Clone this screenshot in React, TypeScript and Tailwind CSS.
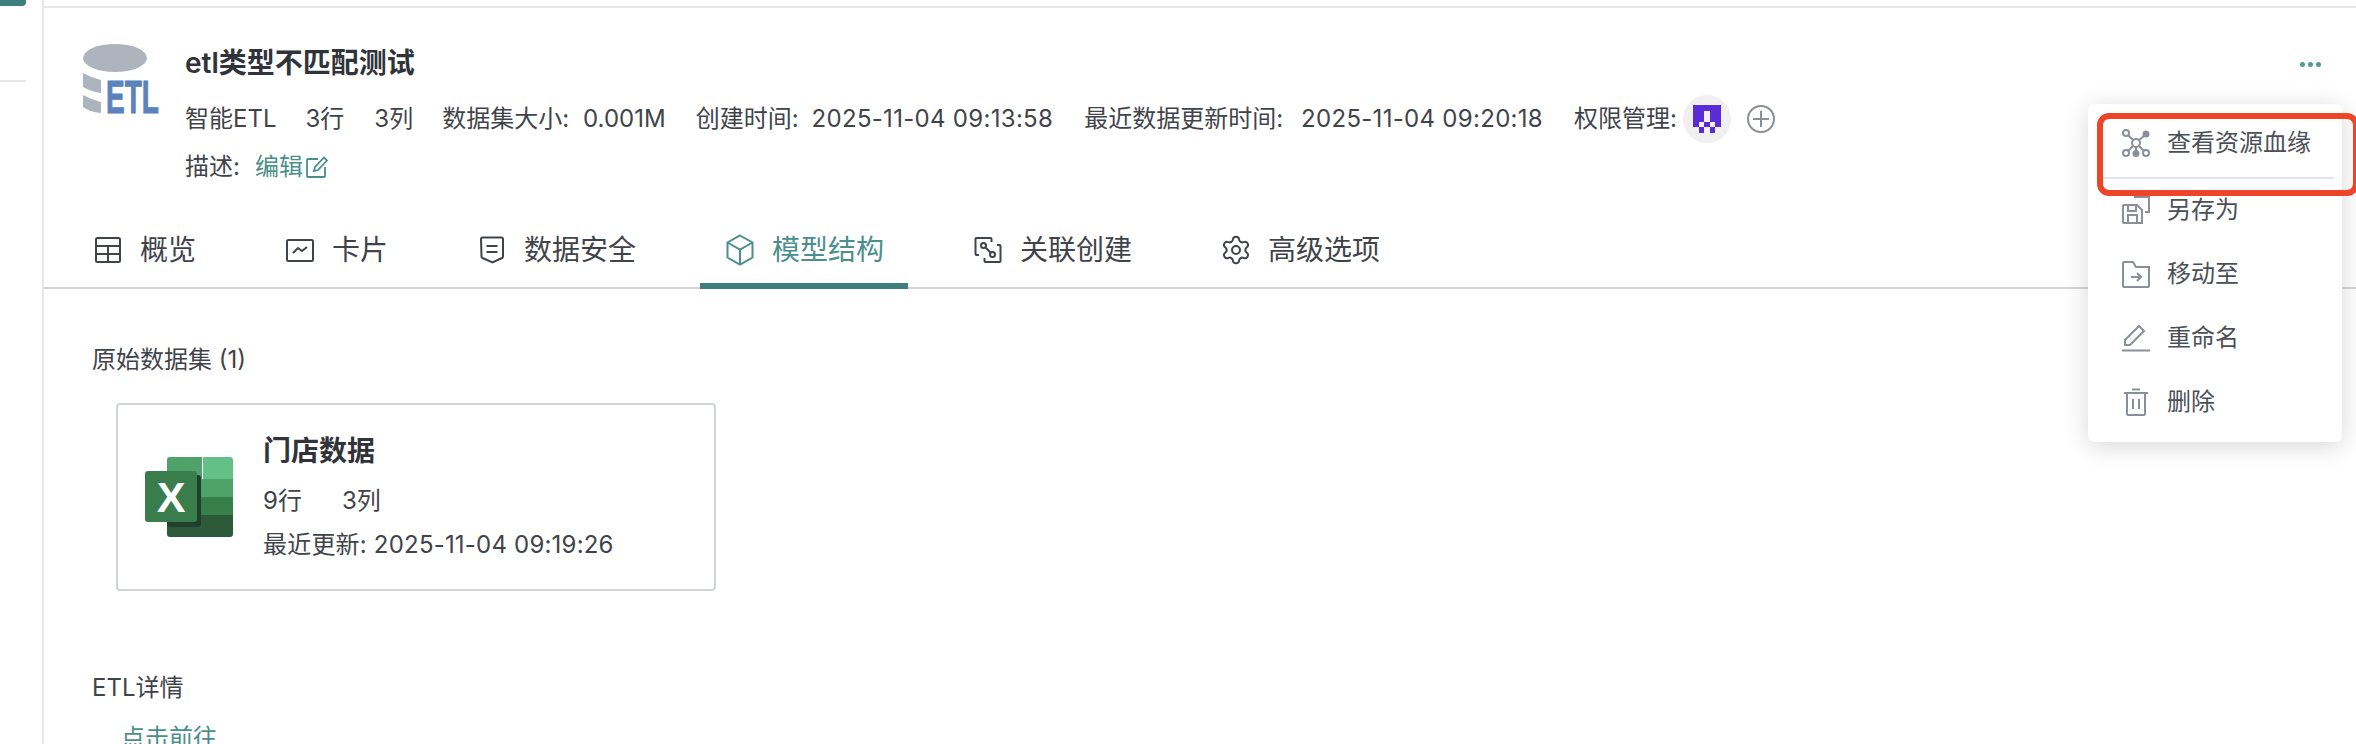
import React from 'react';
import { Settings } from 'lucide-react';

const PIXELS = ['#####', '##.##', '##.##', '#.#.#', '.#.#.'];

const tabs = [
  { label: '概览', icon: <TableIcon /> },
  { label: '卡片', icon: <CardIcon /> },
  { label: '数据安全', icon: <ShieldIcon /> },
  { label: '模型结构', icon: <BoxIcon />, active: true },
  { label: '关联创建', icon: <LinkIcon /> },
  { label: '高级选项', icon: <Settings className="w-[32px] h-[32px] -m-[2px]" strokeWidth={1.5} /> },
];

const menuItems = [
  { label: '查看资源血缘', icon: <LineageIcon />, divider: true },
  { label: '另存为', icon: <SaveAsIcon /> },
  { label: '移动至', icon: <MoveIcon /> },
  { label: '重命名', icon: <RenameIcon /> },
  { label: '删除', icon: <TrashIcon /> },
];

function TableIcon() {
  return (
    <svg width="28" height="28" viewBox="0 0 28 28" fill="none" stroke="currentColor" strokeWidth="2">
      <rect x="2" y="2" width="24" height="24" rx="1.5" />
      <path d="M2 10h24M2 18h24M14 10v16" />
    </svg>
  );
}

function CardIcon() {
  return (
    <svg width="28" height="28" viewBox="0 0 28 28" fill="none" stroke="currentColor" strokeWidth="2">
      <rect x="1" y="4" width="26" height="21" rx="1.5" />
      <path d="M7 17l5-5 4 3 5-4" />
    </svg>
  );
}

function ShieldIcon() {
  return (
    <svg width="28" height="28" viewBox="0 0 28 28" fill="none" stroke="currentColor" strokeWidth="2">
      <path d="M3 3a1.500 1.500 0 0 1 1.500-1.500h19a1.500 1.500 0 0 1 1.500 1.500v17.500q0 1-1 1.500l-9.500 4.500-10-4.500q-1-.5-1-1.500z" />
      <path d="M8.500 10h11M8.500 16h11" />
    </svg>
  );
}

function BoxIcon() {
  return (
    <svg className="-my-[2px]" width="28" height="32" viewBox="0 0 28 32" fill="none" stroke="currentColor" strokeWidth="2">
      <path d="M14 1.500l12.500 7v15l-12.500 7-12.500-7v-15z" />
      <path d="M1.500 8.500l12.500 7 12.500-7M14 15.500v15" />
    </svg>
  );
}

function LinkIcon() {
  return (
    <svg width="28" height="28" viewBox="0 0 28 28" fill="none" stroke="currentColor" strokeWidth="2">
      <path d="M5 19H2.500a1 1 0 0 1-1-1V3a1 1 0 0 1 1-1h14a1 1 0 0 1 1 1v3" />
      <path d="M23 9h2.500a1 1 0 0 1 1 1v15a1 1 0 0 1-1 1h-14a1 1 0 0 1-1-1v-3" />
      <circle cx="9.500" cy="9.500" r="2.500" />
      <circle cx="18.500" cy="18.500" r="2.500" />
      <path d="M11.500 11.500l5 5" />
    </svg>
  );
}

function LineageIcon() {
  return (
    <svg width="28" height="28" viewBox="0 0 28 28" fill="none" stroke="#8a8f99" strokeWidth="2">
      <circle cx="14" cy="14" r="4" />
      <circle cx="4" cy="4" r="3" />
      <circle cx="24" cy="5" r="2.500" fill="#8a8f99" />
      <circle cx="4" cy="24" r="3" />
      <circle cx="14" cy="24.500" r="2.500" fill="#8a8f99" />
      <circle cx="24" cy="24" r="3" />
      <path d="M6 6l5 5M22 7l-5 4M6 22l5-5M22 22l-5-5M14 18v4" />
    </svg>
  );
}

function SaveAsIcon() {
  return (
    <svg width="28" height="28" viewBox="0 0 28 28" fill="none" stroke="#8a8f99" strokeWidth="2">
      <path d="M1 10a1 1 0 0 1 1-1h13l5 5v13H2a1 1 0 0 1-1-1z" />
      <path d="M6 9v6h8V9M6 27v-8h9v8" />
      <path d="M12 1h15v15h-4" />
    </svg>
  );
}

function MoveIcon() {
  return (
    <svg width="28" height="28" viewBox="0 0 28 28" fill="none" stroke="#8a8f99" strokeWidth="2">
      <path d="M1 3a1 1 0 0 1 1-1h9l3 5h13v19a1 1 0 0 1-1 1H2a1 1 0 0 1-1-1z" />
      <path d="M9 17h10M15 13l4 4-4 4" />
    </svg>
  );
}

function RenameIcon() {
  return (
    <svg width="28" height="28" viewBox="0 0 28 28" fill="none" stroke="#8a8f99" strokeWidth="2">
      <path d="M3 21v-5L17 2l5 5L8 21z" />
      <path d="M0 26.500h28" />
    </svg>
  );
}

function TrashIcon() {
  return (
    <svg width="28" height="28" viewBox="0 0 28 28" fill="none" stroke="#8a8f99" strokeWidth="2">
      <path d="M2 5h24M10 1.500h8M5 5v21a1 1 0 0 0 1 1h16a1 1 0 0 0 1-1V5M11 11v10M17 11v10" />
    </svg>
  );
}

function EtlLogo() {
  return (
    <svg className="-mb-[11px]" width="76" height="80" viewBox="0 0 76 80">
      <ellipse cx="32" cy="14" rx="32" ry="14" fill="#aeb4bd" />
      <path d="M0 29q9 5 18 7v13q-9-1-18-6z" fill="#aeb4bd" />
      <path d="M0 51q9 5 18 7v11q-12-1-18-6z" fill="#aeb4bd" />
      <text
        x="23"
        y="69"
        fontFamily="Liberation Sans, sans-serif"
        fontWeight="700"
        fontSize="47"
        textLength="53"
        lengthAdjust="spacingAndGlyphs"
        fill="#5b82bb"
        stroke="#5b82bb"
        strokeWidth="1"
      >
        ETL
      </text>
    </svg>
  );
}

function ExcelLogo() {
  return (
    <svg width="88" height="80" viewBox="0 0 88 80">
      <path d="M22 3a3 3 0 0 1 3-3h32v22H22z" fill="#4fa26a" />
      <path d="M58 0h27a3 3 0 0 1 3 3v19H58z" fill="#63c087" />
      <rect x="22" y="22" width="36" height="18" fill="#4fa26a" />
      <rect x="58" y="22" width="30" height="18" fill="#4fa26a" />
      <rect x="22" y="40" width="66" height="18" fill="#377f4a" />
      <path d="M22 58h66v19a3 3 0 0 1-3 3H25a3 3 0 0 1-3-3z" fill="#2c5a39" />
      <rect x="22" y="18" width="34" height="52" rx="3" fill="#1f3f2b" />
      <rect x="0" y="14" width="52" height="51" rx="3" fill="#3a7d4d" />
      <text
        x="26"
        y="55"
        textAnchor="middle"
        fontFamily="Liberation Sans, sans-serif"
        fontWeight="700"
        fontSize="43"
        fill="#ffffff"
      >
        X
      </text>
    </svg>
  );
}

function PixelAvatar() {
  return (
    <div className="w-[48px] h-[48px] rounded-full bg-[#f0f0f0] flex items-center justify-center">
      <div className="grid grid-cols-5 w-[28px] h-[28px]">
        {PIXELS.join('').split('').map((c, i) => (
          <div key={i} className={c === '#' ? 'bg-[#5b2bd6]' : ''} />
        ))}
      </div>
    </div>
  );
}

export default function App() {
  return (
    <div
      className="relative flex w-full h-[744px] overflow-hidden bg-white text-[#3f444b] text-[24px]"
      style={{ fontFamily: 'Inter, "Noto Sans CJK SC", sans-serif' }}
    >
      <aside className="w-[42px] shrink-0">
        <div className="w-[26px] h-[6px] bg-[#3d7f7d] rounded-br-[4px]" />
        <div className="w-[26px] h-[2px] bg-[#e5e7eb] mt-[74px]" />
      </aside>

      <main className="flex-1 min-w-0 border-l-2 border-[#e5e7eb]">
        <div className="mt-[6px] border-t-2 border-[#e5e7eb]">
          <div className="flex items-start pt-[36px] pl-[39px] pr-[35px]">
            <div className="shrink-0 mr-[26px]">
              <EtlLogo />
            </div>
            <div className="flex-1 pt-[1px]">
              <h1 className="text-[28px] leading-[36px] font-semibold text-[#30343a]">etl类型不匹配测试</h1>
              <div className="flex items-center h-[48px] mt-[14px]">
                <span>智能ETL</span>
                <span className="ml-[29px]">3行</span>
                <span className="ml-[30px]">3列</span>
                <span className="ml-[29px]">数据集大小:</span>
                <span className="ml-[14px]">0.001M</span>
                <span className="ml-[30px]">创建时间:</span>
                <span className="ml-[13px] tracking-[0.3px]">2025-11-04 09:13:58</span>
                <span className="ml-[31px]">最近数据更新时间:</span>
                <span className="ml-[18px] tracking-[0.3px]">2025-11-04 09:20:18</span>
                <span className="ml-[31px]">权限管理:</span>
                <span className="ml-[6px] mr-[16px]">
                  <PixelAvatar />
                </span>
                <svg width="28" height="28" viewBox="0 0 28 28" fill="none" stroke="#8a8f99" strokeWidth="2">
                  <circle cx="14" cy="14" r="13" />
                  <path d="M14 6v16M6 14h16" />
                </svg>
              </div>
              <div className="flex items-center h-[32px] mt-[8px]">
                <span>描述:</span>
                <span className="ml-[15px] flex items-center text-[#4a8f8b]">
                  编辑
                  <svg className="ml-[3px]" width="22" height="22" viewBox="0 0 22 22" fill="none" stroke="currentColor" strokeWidth="1.800">
                    <path d="M12 3H2a1 1 0 0 0-1 1v16a1 1 0 0 0 1 1h16a1 1 0 0 0 1-1v-9" />
                    <path d="M8 15l1-4L18 1.500l3 3L12 14z" />
                  </svg>
                </span>
              </div>
            </div>
            <div className="flex gap-[3px] mt-[18px]">
              <span className="w-[5px] h-[5px] rounded-full bg-[#4f9a94]" />
              <span className="w-[5px] h-[5px] rounded-full bg-[#4f9a94]" />
              <span className="w-[5px] h-[5px] rounded-full bg-[#4f9a94]" />
            </div>
          </div>

          <div className="flex gap-[40px] h-[69px] mt-[37px] pl-[24px] border-b-2 border-[#d1d5db]">
            {tabs.map(tab => (
              <div
                key={tab.label}
                className={
                  tab.active
                    ? 'flex items-center gap-[18px] h-[69px] pl-[26px] pr-[24px] pb-[4px] text-[28px] text-[#4a8f8b] border-b-[6px] border-[#3d7f7d]'
                    : 'flex items-center gap-[18px] h-[69px] pl-[26px] pr-[24px] pb-[4px] text-[28px] border-b-[6px] border-transparent'
                }
              >
                {tab.icon}
                <span>{tab.label}</span>
              </div>
            ))}
          </div>

          <div className="pt-[55px] pl-[48px]">
            <div className="leading-[32px]">原始数据集 (1)</div>
            <div className="flex items-center w-[600px] h-[188px] mt-[27px] ml-[24px] pl-[27px] border-2 border-[#d1d5db] rounded-[4px]">
              <div className="shrink-0 mr-[30px]">
                <ExcelLogo />
              </div>
              <div>
                <div className="text-[28px] leading-[36px] font-semibold text-[#30343a]">门店数据</div>
                <div className="flex gap-[40px] leading-[32px] mt-[16px]">
                  <span>9行</span>
                  <span>3列</span>
                </div>
                <div className="leading-[32px] mt-[12px] tracking-[0.2px]">最近更新: 2025-11-04 09:19:26</div>
              </div>
            </div>
            <div className="leading-[32px] mt-[81px]">ETL详情</div>
            <div className="leading-[32px] mt-[18px] ml-[29px] text-[#4a8f8b]">点击前往</div>
          </div>
        </div>
      </main>

      {/* open dropdown */}
      <div className="absolute left-[2088px] top-[104px] w-[254px] h-[338px] bg-white rounded-[6px] shadow-[0_4px_24px_rgba(0,0,0,0.16)] text-[#4b5058]">
        {menuItems.map((item, i) => (
          <div key={item.label} className={i === 0 ? 'pt-[25px]' : i === 1 ? 'pt-[17px]' : 'pt-[36px]'}>
            <div className="flex items-center h-[28px] pl-[34px] gap-[17px]">
              {item.icon}
              <span>{item.label}</span>
            </div>
            {item.divider && <div className="h-[2px] bg-[#e1e4ea] mt-[20px] ml-[14px] mr-[8px]" />}
          </div>
        ))}
      </div>

      {/* red annotation frame */}
      <div className="absolute left-[2097px] top-[113px] w-[262px] h-[83px] border-[6px] border-[#ee4427] rounded-[12px]" />
    </div>
  );
}
